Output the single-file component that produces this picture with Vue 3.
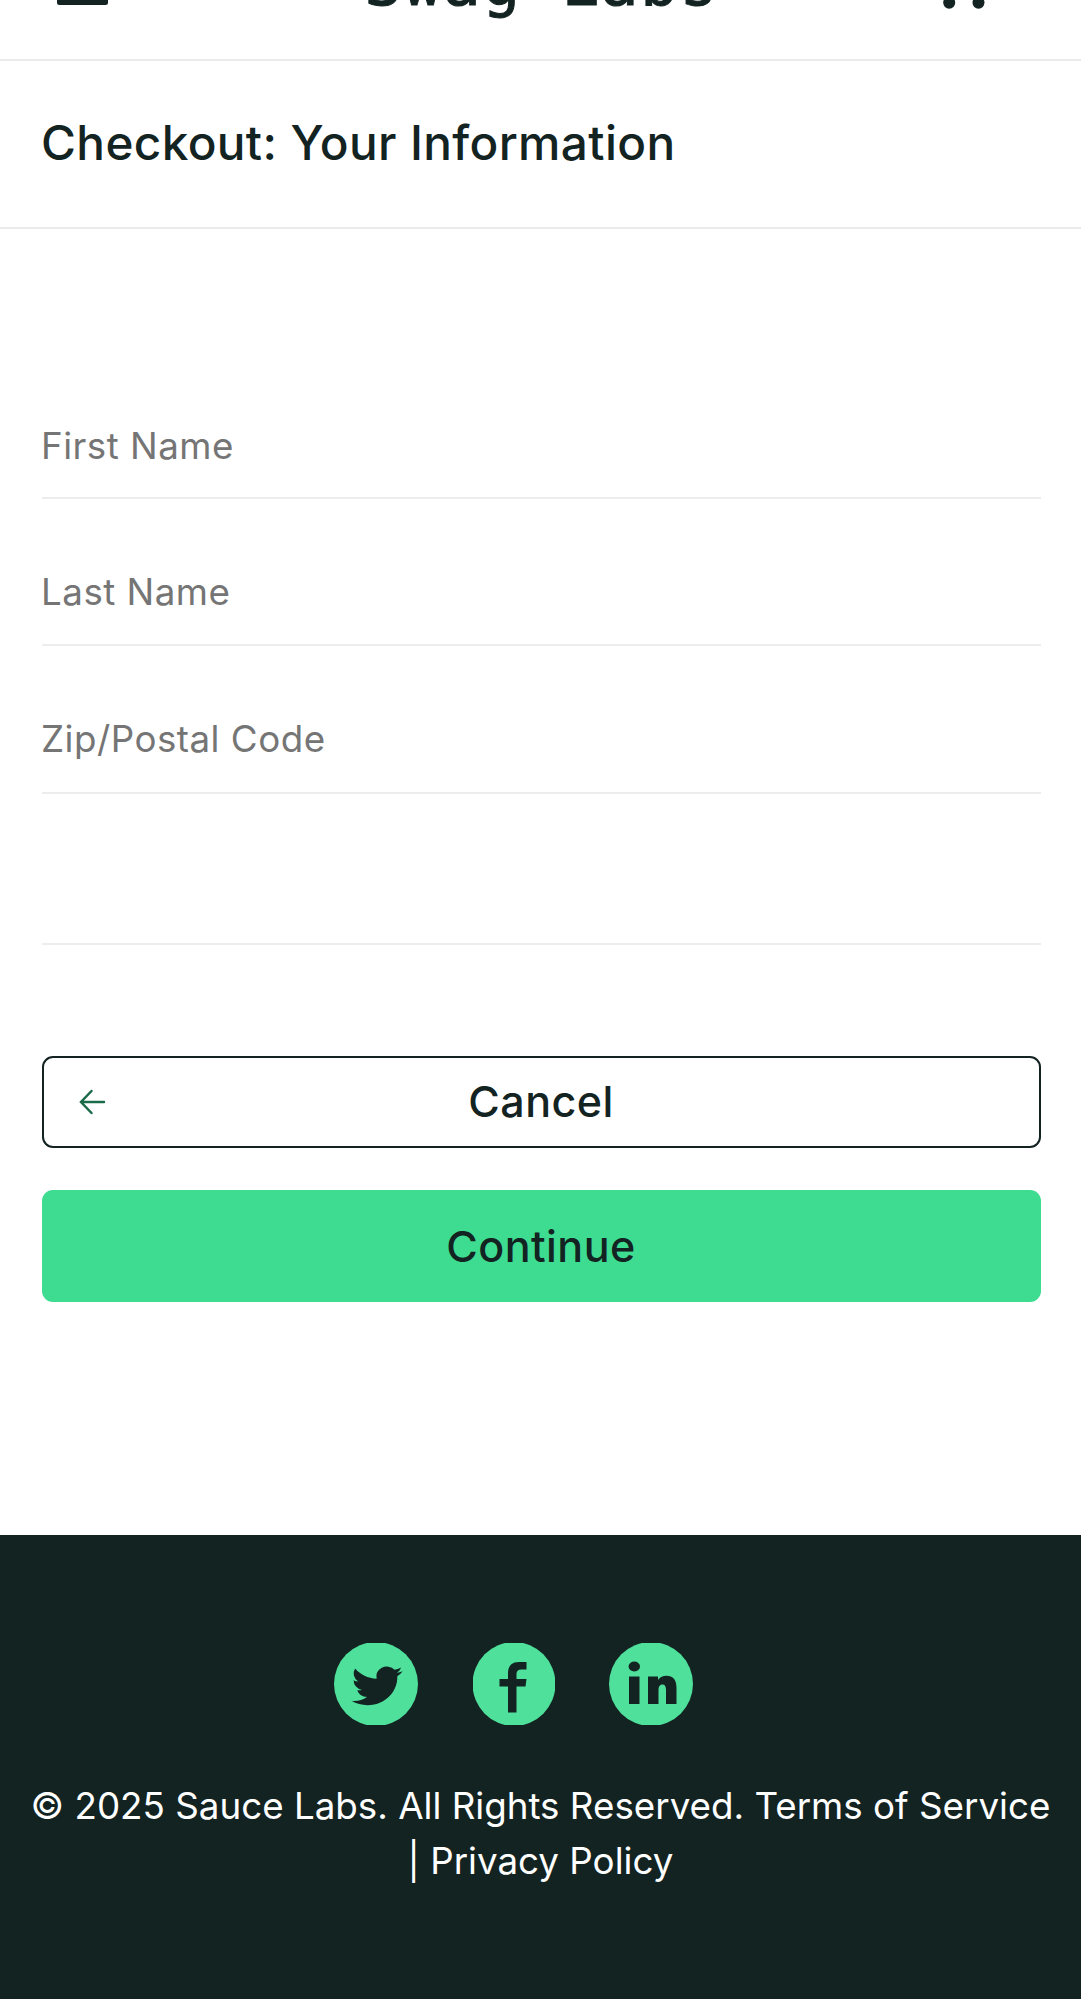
<script setup>
const fields = [
  { id: 'first', label: 'First Name' },
  { id: 'last', label: 'Last Name' },
  { id: 'zip', label: 'Zip/Postal Code' },
]
</script>

<template>
  <div class="page">
    <header class="top">
      <svg class="menu" viewBox="0 0 51 21" width="51" height="21"><rect y="14" width="51" height="7" rx="2.5" /></svg>
      <div class="logo">Swag Labs</div>
      <svg class="cart" viewBox="0 0 42 26" width="42" height="26"><ellipse cx="6.2" cy="19.6" rx="6" ry="6.2" /><ellipse cx="35.5" cy="19.6" rx="6" ry="6.2" /></svg>
    </header>
    <div class="title"><span>Checkout: Your Information</span></div>
    <form class="form" @submit.prevent>
      <div v-for="f in fields" :key="f.id" class="field" :class="f.id"><span>{{ f.label }}</span></div>
      <div class="error"></div>
      <button class="cancel" type="button">
        <svg viewBox="0 0 28 28" width="28" height="28"><path d="M13.5 3 L3 14 L13.5 25 M3 14 H26" /></svg>
        <span>Cancel</span>
      </button>
      <button class="continue" type="submit"><span>Continue</span></button>
    </form>
    <footer class="footer">
      <div class="social">
        <svg viewBox="0 0 84 82" width="84" height="82">
          <ellipse cx="42" cy="41" rx="42" ry="42" />
          <path class="ink" transform="translate(17.5 23) scale(2.13 1.98)" d="M24 2.6a10 10 0 0 1-2.8.8 4.900 4.900 0 0 0 2.100-2.700c-1 .6-2 1-3.100 1.200a4.900 4.900 0 0 0-8.400 4.500C7.700 6.200 4.100 4.200 1.700 1.200A4.900 4.900 0 0 0 3.200 7.800c-.8 0-1.600-.2-2.200-.6v.1a4.900 4.900 0 0 0 3.900 4.800c-.7.2-1.500.2-2.200.1a4.900 4.900 0 0 0 4.600 3.400A9.900 9.900 0 0 1 0 17.600 14 14 0 0 0 7.500 19.800c9.100 0 14.300-7.700 14-14.600A10 10 0 0 0 24 2.600z" />
        </svg>
        <svg viewBox="0 0 82 82" width="82" height="82">
          <ellipse cx="41" cy="41" rx="41.500" ry="42" />
          <path class="ink" d="M35 69.500V43.500H26.500V36H35V30.500C35 22 39.500 19 46 19H53.500V26.500H48.500C45 26.500 43.500 28 43.500 31V36H53.500L52.500 43.500H43.500V69.500Z" />
        </svg>
        <svg viewBox="0 0 84 82" width="84" height="82">
          <ellipse cx="42" cy="41" rx="42" ry="42" />
          <path class="ink" d="M20 33.500H30.500V61H20ZM39 33.500H49V37C51 34 54 32.800 57.500 32.800C65 32.800 67.500 38 67.500 45V61H57V47C57 43.500 56 41.500 53.500 41.500C50.500 41.500 49.500 44 49.500 47V61H39Z" />
          <ellipse class="ink" cx="25.300" cy="23.500" rx="5.700" ry="5" />
        </svg>
      </div>
      <div class="copy"><span class="l1">© 2025 Sauce Labs. All Rights Reserved. Terms of Service</span><span class="l2">| Privacy Policy</span></div>
    </footer>
  </div>
</template>

<style>
body { margin: 0; background: #fff; }
</style>

<style scoped>
.page { width: 1081px; height: 1999px; overflow: hidden; display: flex; flex-direction: column; font-family: Inter, "Open Sans", sans-serif; color: #132322; background: #fff; }
.top { box-sizing: border-box; height: 61px; flex: none; border-bottom: 2px solid #ebebeb; display: flex; align-items: flex-start; position: relative; }
.top svg { fill: #132322; flex: none; }
.menu { margin: -16px 0 0 57px; }
.logo { margin: -54px 0 0 256px; width: 371px; font: 63px/75px "DejaVu Sans Mono", monospace; letter-spacing: 1.500px; white-space: pre; -webkit-text-stroke: 1px #132322; }
.cart { margin: -17px 0 0 208px; }
.title { box-sizing: border-box; height: 168px; flex: none; border-bottom: 2px solid #ebebeb; padding: 47px 0 0 41px; font-size: 47.700px; line-height: 70px; font-weight: 500; letter-spacing: 0.370px; white-space: nowrap; }
.form { height: 1306px; flex: none; padding: 0 40.500px 0 41.500px; display: flex; flex-direction: column; }
.field { box-sizing: border-box; height: 147px; border-bottom: 2px solid #ededed; padding-top: 68px; font-size: 36.750px; line-height: 50px; letter-spacing: 0.480px; color: #757575; }
.field span { margin-left: -0.500px; }
.field.first { margin-top: 123px; padding-top: 69px; }
.field.zip { height: 148px; }
.error { box-sizing: border-box; height: 151px; border-bottom: 2px solid #ededed; }
button { box-sizing: border-box; width: 100%; margin: 0; padding: 0 0 2px; border: 0; border-radius: 11px; font-family: inherit; font-size: 43px; font-weight: 500; letter-spacing: 0.450px; color: #132322; display: flex; align-items: center; justify-content: center; }
.cancel { margin-top: 111px; height: 92px; border: 2px solid #132322; background: #fff; position: relative; }
.cancel svg { position: absolute; left: 34px; top: 30px; fill: none; stroke: #1b6b4a; stroke-width: 2.500; stroke-linecap: round; }
.continue { margin-top: 42px; padding: 0; height: 112px; background: #3ddc91; }
.footer { flex: 1; background: #132322; color: #fff; }
.social { display: flex; padding: 108px 0 0 334px; height: 82px; }
.social svg { fill: #4fe09b; margin-right: 55px; }
.social svg:nth-child(2) { margin-right: 54px; }
.social .ink { fill: #132322; }
.copy { padding-top: 53px; display: flex; flex-direction: column; align-items: center; font-size: 36.750px; line-height: 55px; white-space: nowrap; }
</style>
